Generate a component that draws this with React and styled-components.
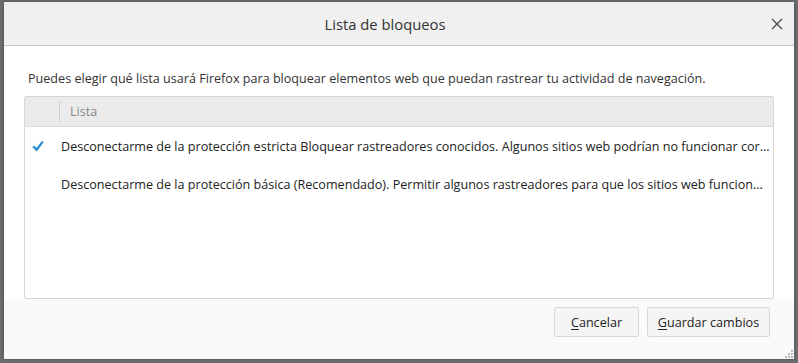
import React from "react";
import styled, { createGlobalStyle } from "styled-components";

const Global = createGlobalStyle`
  html, body { margin: 0; padding: 0; }
  body {
    background: #6d6d6d;
    font-family: "Open Sans", "Noto Sans", sans-serif;
    color: #2b2b2b;
  }
`;

const Backdrop = styled.div`
  width: 798px;
  height: 363px;
  box-sizing: border-box;
  padding: 2px 4px 4px 4px;
  display: flex;
`;

const Dialog = styled.div`
  position: relative;
  flex: 1;
  display: flex;
  flex-direction: column;
  background: #ffffff;
  box-shadow: 0 0 3px rgba(0, 0, 0, 0.35);
`;

const Header = styled.div`
  height: 43px;
  flex: none;
  display: grid;
  grid-template-columns: 1fr auto 1fr;
  align-items: center;
  background: #f0f0f0;
  border-bottom: 1px solid #c8c8c8;
  padding-right: 28px;
`;

const Title = styled.div`
  grid-column: 2;
  font-size: 14.8px;
  color: #333;
`;

const Close = styled.button`
  grid-column: 3;
  justify-self: end;
  margin-right: -19px;
  width: 16px;
  height: 16px;
  padding: 0;
  border: 0;
  background: transparent;
  display: flex;
  align-items: center;
  justify-content: center;
`;

const Body = styled.div`
  flex: none;
  padding: 24px 20px 0 20px;
  display: flex;
  flex-direction: column;
`;

const Description = styled.p`
  margin: 0 0 9px 4px;
  font-size: 12.6px;
  line-height: 17px;
  color: #333;
`;

const List = styled.div`
  height: 201px;
  border: 1px solid #d6d6d6;
  border-radius: 2px;
  display: flex;
  flex-direction: column;
  overflow: hidden;
`;

const ListHead = styled.div`
  height: 29px;
  flex: none;
  display: grid;
  grid-template-columns: 34px 1fr;
  align-items: center;
  background: #ebebeb;
  border-bottom: 1px solid #dcdcdc;
`;

const HeadCell = styled.div`
  height: 21px;
  display: flex;
  align-items: center;
  border-left: ${(p) => (p.$sep ? "1px solid #cfcfcf" : "none")};
  padding-left: ${(p) => (p.$sep ? "10px" : "0")};
  font-size: 12.6px;
  color: #8a8a8a;
`;

const Row = styled.div`
  height: 38px;
  flex: none;
  display: grid;
  grid-template-columns: 36px 1fr;
  align-items: center;
`;

const CheckCell = styled.div`
  display: flex;
  justify-content: flex-start;
  padding-left: 7px;
`;

const RowText = styled.div`
  font-size: 12.6px;
  color: #222;
  white-space: nowrap;
`;

const Footer = styled.div`
  flex: 1;
  background: #fafafa;
  display: flex;
  justify-content: flex-end;
  align-items: flex-start;
  gap: 8px;
  padding: 8px 24px 0 0;
`;

const Button = styled.button`
  width: ${(p) => p.$w}px;
  height: 30px;
  box-sizing: border-box;
  padding: 0;
  border: 1px solid #d9d9d9;
  border-radius: 2px;
  background: #f5f5f5;
  font-family: inherit;
  font-size: 12.6px;
  color: #222;
  display: flex;
  align-items: center;
  justify-content: center;
  u { text-decoration: underline; text-underline-offset: 2px; }
`;

const Grip = styled.svg`
  position: absolute;
  right: 1px;
  bottom: 1px;
`;

const Check = () => (
  <svg width="12" height="12" viewBox="0 0 12 12">
    <path d="M1.2 6.3 L4.6 9.8 L10.8 1.6" fill="none" stroke="#2a8ad4" strokeWidth="2.3" />
  </svg>
);

const rows = [
  {
    checked: true,
    text: "Desconectarme de la protección estricta Bloquear rastreadores conocidos. Algunos sitios web podrían no funcionar cor...",
  },
  {
    checked: false,
    text: "Desconectarme de la protección básica (Recomendado). Permitir algunos rastreadores para que los sitios web funcion...",
  },
];

export default function App() {
  return (
    <>
      <Global />
      <Backdrop>
        <Dialog>
          <Header>
            <Title>Lista de bloqueos</Title>
            <Close aria-label="Cerrar">
              <svg width="12" height="12" viewBox="0 0 12 12">
                <path d="M1 1 L11 11 M11 1 L1 11" stroke="#4a4a4a" strokeWidth="1.3" />
              </svg>
            </Close>
          </Header>
          <Body>
            <Description>
              Puedes elegir qué lista usará Firefox para bloquear elementos web que puedan rastrear tu actividad de navegación.
            </Description>
            <List>
              <ListHead>
                <HeadCell />
                <HeadCell $sep>Lista</HeadCell>
              </ListHead>
              {rows.map((r, i) => (
                <Row key={i}>
                  <CheckCell>{r.checked ? <Check /> : null}</CheckCell>
                  <RowText>{r.text}</RowText>
                </Row>
              ))}
            </List>
          </Body>
          <Footer>
            <Button $w={85}>
              <u>C</u>ancelar
            </Button>
            <Button $w={123}>
              <u>G</u>uardar cambios
            </Button>
          </Footer>
          <Grip width="8" height="8" viewBox="0 0 8 8">
            {[[6, 0], [3, 3], [6, 3], [0, 6], [3, 6], [6, 6]].map(([x, y], i) => (
              <rect key={i} x={x} y={y} width="2" height="2" fill="#b9b9b9" />
            ))}
          </Grip>
        </Dialog>
      </Backdrop>
    </>
  );
}
